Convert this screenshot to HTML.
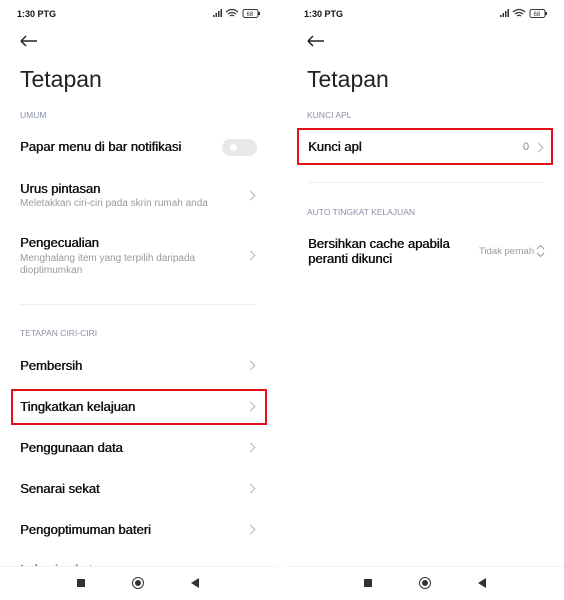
<!DOCTYPE html>
<html><head><meta charset="utf-8"><style>
*{margin:0;padding:0;box-sizing:border-box}
body{width:564px;height:600px;background:#fff;font-family:"Liberation Sans",sans-serif;position:relative;overflow:hidden;color:#111}
.a{position:absolute;white-space:nowrap}
.st{font-size:9px;font-weight:bold;top:9px}
.tt{font-size:23px;color:#222;top:66px}
.hd{font-size:8.5px;color:#8a90a8}
.it{font-size:13px;color:#111;font-weight:normal;text-shadow:0.5px 0 0 #111}
.sub{font-size:10px;color:#9a9a9a}
.ch{width:7px;height:7px;border-top:1px solid #b5b5b5;border-right:1px solid #b5b5b5;transform:rotate(45deg)}
.dv{height:1px;background:#eee}
.box{border:2px solid #e3121a}
</style></head><body>
<div class="a st" style="left:17px">1:30 PTG</div>
<div class="a st" style="left:304px">1:30 PTG</div>
<svg class="a" style="left:212px;top:8px" width="56" height="12"><g fill="#333"><rect x="1" y="7" width="1.5" height="2"/><rect x="3.5" y="5" width="1.5" height="4"/><rect x="6" y="3" width="1.5" height="6"/><rect x="8.5" y="1" width="1.5" height="8"/></g><path d="M14 4 q6 -5 12 0 M16 6 q4 -3 8 0 M18 8 q2 -1.5 4 0" stroke="#333" fill="none" stroke-width="1.2"/><rect x="31" y="1.5" width="15" height="8" rx="2" fill="none" stroke="#333"/><text x="34.5" y="8" font-size="6" fill="#333" font-family="Liberation Sans">68</text><rect x="46.5" y="4" width="1.5" height="3" fill="#333"/></svg>
<svg class="a" style="left:499px;top:8px" width="56" height="12"><g fill="#333"><rect x="1" y="7" width="1.5" height="2"/><rect x="3.5" y="5" width="1.5" height="4"/><rect x="6" y="3" width="1.5" height="6"/><rect x="8.5" y="1" width="1.5" height="8"/></g><path d="M14 4 q6 -5 12 0 M16 6 q4 -3 8 0 M18 8 q2 -1.5 4 0" stroke="#333" fill="none" stroke-width="1.2"/><rect x="31" y="1.5" width="15" height="8" rx="2" fill="none" stroke="#333"/><text x="34.5" y="8" font-size="6" fill="#333" font-family="Liberation Sans">68</text><rect x="46.5" y="4" width="1.5" height="3" fill="#333"/></svg>
<svg class="a" style="left:20px;top:35px" width="18" height="12"><path d="M1 6H17M1 6L6 1M1 6L6 11" stroke="#222" stroke-width="1.5" fill="none"/></svg>
<svg class="a" style="left:307px;top:35px" width="18" height="12"><path d="M1 6H17M1 6L6 1M1 6L6 11" stroke="#222" stroke-width="1.5" fill="none"/></svg>
<div class="a tt" style="left:20px">Tetapan</div>
<div class="a tt" style="left:307px">Tetapan</div>

<div class="a hd" style="left:20px;top:110px">UMUM</div>
<div class="a it" style="left:20px;top:139px">Papar menu di bar notifikasi</div>
<div class="a" style="left:222px;top:139px;width:35px;height:17px;border-radius:9px;background:#e8e8e8"><div style="position:absolute;left:8px;top:5px;width:7px;height:7px;border-radius:50%;background:#fff"></div></div>
<div class="a it" style="left:20px;top:181px">Urus pintasan</div>
<div class="a sub" style="left:20px;top:198px">Meletakkan ciri-ciri pada skrin rumah anda</div>
<div class="a ch" style="left:247px;top:192px"></div>
<div class="a it" style="left:20px;top:235px">Pengecualian</div>
<div class="a sub" style="left:20px;top:253px;line-height:12px">Menghalang item yang terpilih daripada<br>dioptimumkan</div>
<div class="a ch" style="left:247px;top:252px"></div>
<div class="a dv" style="left:20px;top:304px;width:236px"></div>
<div class="a hd" style="left:20px;top:328px">TETAPAN CIRI-CIRI</div>
<div class="a it" style="left:20px;top:358px">Pembersih</div><div class="a ch" style="left:247px;top:362px"></div>
<div class="a box" style="left:11px;top:389px;width:256px;height:36px"></div>
<div class="a it" style="left:20px;top:399px">Tingkatkan kelajuan</div><div class="a ch" style="left:247px;top:403px"></div>
<div class="a it" style="left:20px;top:440px">Penggunaan data</div><div class="a ch" style="left:247px;top:444px"></div>
<div class="a it" style="left:20px;top:481px">Senarai sekat</div><div class="a ch" style="left:247px;top:485px"></div>
<div class="a it" style="left:20px;top:522px">Pengoptimuman bateri</div><div class="a ch" style="left:247px;top:526px"></div>
<div class="a it" style="left:20px;top:562px;color:#888;height:5px;overflow:hidden">Lokasi sekat</div>

<div class="a hd" style="left:307px;top:110px">KUNCI APL</div>
<div class="a box" style="left:297px;top:128px;width:256px;height:37px"></div>
<div class="a it" style="left:308px;top:139px">Kunci apl</div>
<div class="a" style="left:523px;top:141px;font-size:11px;color:#888">0</div>
<div class="a ch" style="left:535px;top:144px"></div>
<div class="a dv" style="left:308px;top:182px;width:236px"></div>
<div class="a hd" style="left:307px;top:207px">AUTO TINGKAT KELAJUAN</div>
<div class="a it" style="left:308px;top:236px;line-height:15px">Bersihkan cache apabila<br>peranti dikunci</div>
<div class="a" style="left:479px;top:246px;font-size:9.5px;color:#9a9a9a">Tidak pernah</div>
<svg class="a" style="left:536px;top:244px" width="9" height="14"><path d="M1 5L4.5 1.5L8 5M1 9L4.5 12.5L8 9" stroke="#999" fill="none"/></svg>

<div class="a" style="left:0;top:566px;width:277px;height:1px;background:#f2f2f2"></div>
<div class="a" style="left:287px;top:566px;width:277px;height:1px;background:#f2f2f2"></div>
<div class="a" style="left:77px;top:579px;width:8px;height:8px;background:#333"></div>
<div class="a" style="left:132px;top:577px;width:12px;height:12px;border-radius:50%;border:1.5px solid #333"><div style="margin:1.5px;width:6px;height:6px;border-radius:50%;background:#333"></div></div>
<svg class="a" style="left:191px;top:578px" width="9" height="10"><path d="M0 5L8 0V10Z" fill="#333"/></svg>
<div class="a" style="left:364px;top:579px;width:8px;height:8px;background:#333"></div>
<div class="a" style="left:419px;top:577px;width:12px;height:12px;border-radius:50%;border:1.5px solid #333"><div style="margin:1.5px;width:6px;height:6px;border-radius:50%;background:#333"></div></div>
<svg class="a" style="left:478px;top:578px" width="9" height="10"><path d="M0 5L8 0V10Z" fill="#333"/></svg>
</body></html>
